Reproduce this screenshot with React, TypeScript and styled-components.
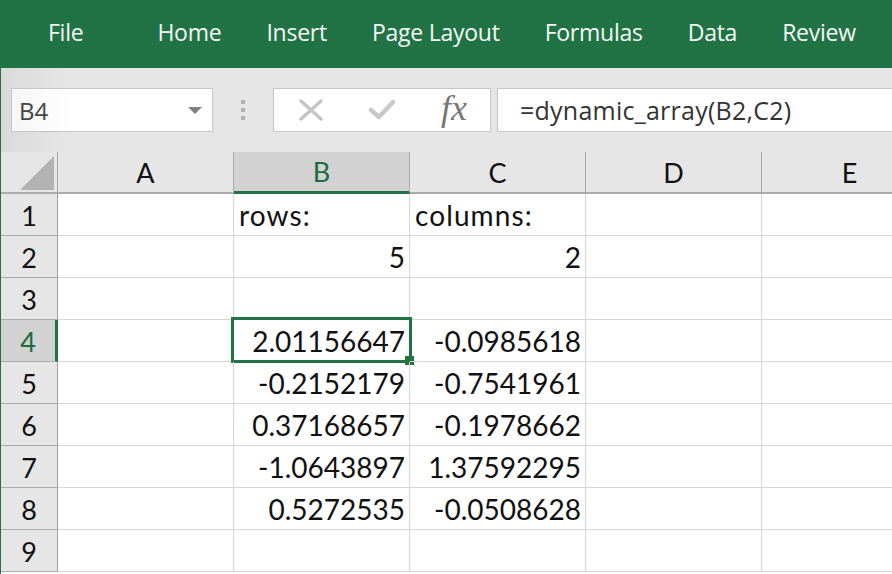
import React from "react";
import styled, { createGlobalStyle } from "styled-components";

const GREEN = "#217346";

const Global = createGlobalStyle`
  html, body { margin: 0; padding: 0; background: #fff; }
  body { width: 892px; height: 574px; overflow: hidden; font-family: "Lato", "Liberation Sans", sans-serif; }
`;

const Page = styled.div`
  width: 892px;
  height: 574px;
  overflow: hidden;
  display: flex;
  flex-direction: column;
  box-sizing: border-box;
  border-left: 1px solid ${GREEN};
`;

const Ribbon = styled.div`
  height: 68px;
  margin-left: -1px;
  flex: none;
  background: ${GREEN};
  display: flex;
  align-items: center;
  padding: 0 0 4px 48px;
  box-sizing: border-box;
  gap: 45px;
  white-space: nowrap;
`;

const Tab = styled.div<{ $file?: boolean }>`
  font-family: "Open Sans", sans-serif;
  font-size: 23px;
  letter-spacing: -0.25px;
  color: #f4f8f5;
  margin-right: ${(p) => (p.$file ? "29px" : "0")};
`;

const Toolbar = styled.div`
  height: 84px;
  flex: none;
  background: linear-gradient(90deg, #dadada 0, #e6e6e6 70px);
  display: flex;
  align-items: flex-start;
  padding: 20px 0 0 10px;
  box-sizing: border-box;
`;

const Field = styled.div`
  height: 44px;
  box-sizing: border-box;
  border: 1px solid #c6c6c6;
  background: #fff;
  display: flex;
  align-items: center;
`;

const NameBox = styled(Field)`
  width: 202px;
  padding: 0 10px 0 7px;
  justify-content: space-between;
  background: linear-gradient(90deg, #f6f6f6 0, #fff 60px);
  font-family: "Open Sans", sans-serif;
  font-size: 24px;
  color: #444;
`;

const Caret = styled.div`
  width: 0;
  height: 0;
  border-left: 7px solid transparent;
  border-right: 7px solid transparent;
  border-top: 7px solid #808080;
`;

const Grip = styled.div`
  width: 60px;
  height: 44px;
  display: flex;
  flex-direction: column;
  align-items: center;
  justify-content: center;
  gap: 4px;
  padding-right: 1px;
  box-sizing: border-box;
`;

const GripDot = styled.div`
  width: 4px;
  height: 4px;
  background: #b2b2b2;
`;

const Buttons = styled(Field)`
  width: 218px;
  margin-right: 6px;
  padding-left: 24px;
  gap: 43px;
`;

const Fx = styled.span`
  font-family: "Liberation Serif", serif;
  font-style: italic;
  font-size: 36px;
  line-height: 1;
  color: #777;
  margin: -4px 0 0 2px;
`;

const Formula = styled(Field)`
  flex: 1;
  border-right: none;
  padding: 0 0 0 22px;
  font-family: "Open Sans", sans-serif;
  font-size: 25px;
  letter-spacing: 0.25px;
  color: #333;
`;

const Sheet = styled.div`
  flex: 1;
  display: grid;
  grid-template-columns: 57px repeat(5, 176px);
  grid-auto-rows: 42px;
  grid-template-rows: 42px;
  overflow: hidden;
`;

const Corner = styled.div`
  background: #e6e6e6;
  border-right: 1px solid #aaa;
  border-bottom: 2px solid #ababab;
  box-sizing: border-box;
  display: flex;
  align-items: flex-end;
  justify-content: flex-end;
  padding: 0 3px 2px 0;
`;

const ColHead = styled.div<{ $active?: boolean }>`
  box-sizing: border-box;
  display: flex;
  align-items: center;
  justify-content: center;
  font-size: 27px;
  background: ${(p) => (p.$active ? "#d2d2d2" : "#e6e6e6")};
  color: ${(p) => (p.$active ? "#1d6b40" : "#111")};
  border-right: 1px solid #ababab;
  border-bottom: ${(p) => (p.$active ? `3px solid ${GREEN}` : "2px solid #ababab")};
`;

const RowHead = styled.div<{ $active?: boolean }>`
  box-sizing: border-box;
  display: flex;
  align-items: center;
  justify-content: center;
  padding-top: 1px;
  font-size: 27px;
  background: ${(p) => (p.$active ? "#d2d2d2" : "#e6e6e6")};
  color: ${(p) => (p.$active ? "#1d6b40" : "#111")};
  border-bottom: 1px solid #ababab;
  border-right: ${(p) => (p.$active ? `3px solid ${GREEN}` : "1px solid #a0a0a0")};
`;

const Cell = styled.div<{ $text?: boolean }>`
  position: relative;
  box-sizing: border-box;
  display: flex;
  align-items: center;
  justify-content: ${(p) => (p.$text ? "flex-start" : "flex-end")};
  padding: 1px 4px 0 5px;
  border-right: 1px solid #d6d6d6;
  border-bottom: 1px solid #d6d6d6;
  font-size: 28px;
  letter-spacing: ${(p) => (p.$text ? "1.1px" : "0")};
  color: #111;
  white-space: nowrap;
`;

const Selection = styled.div`
  position: absolute;
  left: -3px;
  top: -3px;
  right: -3px;
  bottom: -2px;
  border: 3px solid ${GREEN};
  pointer-events: none;
`;

const Handle = styled.div`
  position: absolute;
  right: -5px;
  bottom: -5px;
  width: 9px;
  height: 9px;
  background: ${GREEN};
`;

const tabs = ["File", "Home", "Insert", "Page Layout", "Formulas", "Data", "Review"];
const columns = ["A", "B", "C", "D", "E"];

// rows 1..9, each with the values of columns B and C
const rows: [string, string][] = [
  ["rows:", "columns:"],
  ["5", "2"],
  ["", ""],
  ["2.01156647", "-0.0985618"],
  ["-0.2152179", "-0.7541961"],
  ["0.37168657", "-0.1978662"],
  ["-1.0643897", "1.37592295"],
  ["0.5272535", "-0.0508628"],
  ["", ""],
];

export default function App() {
  return (
    <Page>
      <Global />
      <Ribbon>
        {tabs.map((t) => (
          <Tab key={t} $file={t === "File"}>
            {t}
          </Tab>
        ))}
      </Ribbon>
      <Toolbar>
        <NameBox>
          B4
          <Caret />
        </NameBox>
        <Grip>
          <GripDot />
          <GripDot />
          <GripDot />
        </Grip>
        <Buttons>
          <svg width="26" height="22" viewBox="0 0 26 22">
            <path d="M3 2 L23 20 M23 2 L3 20" stroke="#c4c4c4" strokeWidth="3.4" strokeLinecap="round" fill="none" />
          </svg>
          <svg width="28" height="22" viewBox="0 0 28 22" style={{ marginLeft: 1 }}>
            <path d="M3 11 L11 18 L25 3" stroke="#c8c8c8" strokeWidth="4.4" strokeLinecap="round" strokeLinejoin="round" fill="none" />
          </svg>
          <Fx>fx</Fx>
        </Buttons>
        <Formula>=dynamic_array(B2,C2)</Formula>
      </Toolbar>
      <Sheet>
        <Corner>
          <svg width="34" height="34" viewBox="0 0 34 34">
            <path d="M34 0 V34 H0 Z" fill="#b2b2b2" />
          </svg>
        </Corner>
        {columns.map((c) => (
          <ColHead key={c} $active={c === "B"}>
            {c}
          </ColHead>
        ))}
        {rows.map(([b, c], i) => (
          <React.Fragment key={i}>
            <RowHead $active={i === 3}>{i + 1}</RowHead>
            <Cell />
            <Cell $text={i === 0}>
              {b}
              {i === 3 && (
                <Selection>
                  <Handle />
                </Selection>
              )}
            </Cell>
            <Cell $text={i === 0}>{c}</Cell>
            <Cell />
            <Cell />
          </React.Fragment>
        ))}
      </Sheet>
    </Page>
  );
}
